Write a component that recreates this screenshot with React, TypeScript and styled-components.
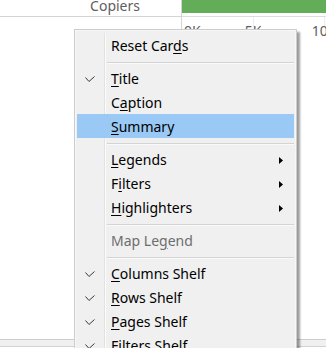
import React from 'react';
import styled, { createGlobalStyle } from 'styled-components';

const Global = createGlobalStyle`
  html, body { margin: 0; padding: 0; background: #ffffff; }
  body { font-family: "Noto Sans", "Open Sans", sans-serif; overflow: hidden; }
`;

const Page = styled.div`
  position: relative;
  width: 326px;
  height: 348px;
  overflow: hidden;
  display: flex;
  flex-direction: column;
  background: #ffffff;
`;

const Body = styled.div`
  flex: 1;
  display: grid;
  grid-template-columns: 182px 1fr;
`;

const RowHeaderPane = styled.div`
  border-right: 1px solid #d4d4d4;
  display: flex;
  flex-direction: column;
`;

const HeaderCell = styled.div`
  box-sizing: border-box;
  height: 17px;
  border-bottom: 1px solid #d4d4d4;
  display: flex;
  justify-content: flex-end;
  align-items: flex-start;
  padding-right: 41px;
`;

const HeaderText = styled.span`
  font-size: 14px;
  line-height: 11px;
  color: #5e5e5e;
`;

const ChartPane = styled.div`
  display: flex;
  flex-direction: column;
`;

const BarRow = styled.div`
  box-sizing: border-box;
  height: 17px;
  border-bottom: 1px solid #dcdcdc;
`;

const Bar = styled.div`
  height: 13px;
  background: #63ad58;
`;

const AxisRow = styled.div`
  position: relative;
  height: 24px;
`;

const GridLine = styled.div`
  position: absolute;
  top: 0;
  width: 1px;
  height: 10px;
  background: #ececec;
`;

const AxisLabel = styled.span`
  position: absolute;
  top: 6px;
  font-size: 14px;
  line-height: 16px;
  color: #5e5e5e;
  white-space: nowrap;
`;

const Footer = styled.div`
  height: 6px;
  margin-bottom: 1px;
  border-top: 1px solid #cdcdcd;
  border-bottom: 1px solid #d2d2d2;
  background: #f0f0f0;
`;

const Menu = styled.div`
  position: absolute;
  left: 74px;
  top: 29px;
  width: 223px;
  box-sizing: border-box;
  border: 1px solid #cccccc;
  padding: 3px 2px 2px 2px;
  background: #f0f0f0;
  box-shadow: inset 0 0 0 1px #f7f7f7, 3px 3px 2px rgba(0, 0, 0, 0.38);
  font-size: 14px;
  color: #000000;
`;

const MenuList = styled.div`
  display: flex;
  flex-direction: column;
  background: linear-gradient(
    to right,
    transparent 27px,
    #e2e2e2 27px,
    #e2e2e2 28px,
    #fbfbfb 28px,
    #fbfbfb 29px,
    transparent 29px
  );
`;

const Item = styled.div<{ $active?: boolean; $disabled?: boolean }>`
  display: grid;
  grid-template-columns: 27px 1fr auto;
  align-items: center;
  height: 24px;
  background: ${(p) => (p.$active ? '#99c9f4' : 'transparent')};
  color: ${(p) => (p.$disabled ? '#6d6d6d' : '#000000')};
`;

const CheckCell = styled.div`
  display: flex;
  align-items: center;
  padding-left: 8px;
  height: 24px;
  padding-top: 3px;
  box-sizing: border-box;
`;

const Label = styled.span`
  padding-left: 7px;
  padding-top: 2px;
  line-height: 22px;
  white-space: nowrap;
  u {
    text-decoration: underline;
    text-underline-offset: 2px;
    text-decoration-thickness: 1px;
  }
`;

const ArrowCell = styled.div`
  display: flex;
  align-items: center;
  padding-right: 11px;
  padding-top: 2px;
  height: 24px;
  box-sizing: border-box;
`;

const Separator = styled.div`
  height: 9px;
  margin-left: 30px;
  box-sizing: border-box;
  padding-top: 5px;
  &::before {
    content: '';
    display: block;
    height: 1px;
    background: #d4d4d4;
    box-shadow: 0 1px 0 #fafafa;
  }
`;

type Entry =
  | { kind: 'sep' }
  | {
      kind: 'item';
      label: string;
      u: number;
      checked?: boolean;
      submenu?: boolean;
      disabled?: boolean;
      active?: boolean;
    };

const entries: Entry[] = [
  { kind: 'item', label: 'Reset Cards', u: 9 },
  { kind: 'sep' },
  { kind: 'item', label: 'Title', u: 0, checked: true },
  { kind: 'item', label: 'Caption', u: 1 },
  { kind: 'item', label: 'Summary', u: 0, active: true },
  { kind: 'sep' },
  { kind: 'item', label: 'Legends', u: 0, submenu: true },
  { kind: 'item', label: 'Filters', u: 1, submenu: true },
  { kind: 'item', label: 'Highlighters', u: 0, submenu: true },
  { kind: 'sep' },
  { kind: 'item', label: 'Map Legend', u: 6, disabled: true },
  { kind: 'sep' },
  { kind: 'item', label: 'Columns Shelf', u: 0, checked: true },
  { kind: 'item', label: 'Rows Shelf', u: 0, checked: true },
  { kind: 'item', label: 'Pages Shelf', u: 0, checked: true },
  { kind: 'item', label: 'Filters Shelf', u: 1, checked: true },
];

const Check = () => (
  <svg width="10" height="7" viewBox="0 0 10 7">
    <path d="M0.5 1.5 L4 5.5 L9.5 0.5" fill="none" stroke="#3a3a3a" strokeWidth="1" />
  </svg>
);

const SubArrow = () => (
  <svg width="4" height="7" viewBox="0 0 4 7">
    <polygon points="0,0 4,3.5 0,7" fill="#000000" />
  </svg>
);

const Underlined = ({ text, index }: { text: string; index: number }) => (
  <>
    {text.slice(0, index)}
    <u>{text.charAt(index)}</u>
    {text.slice(index + 1)}
  </>
);

const ticks = [
  { value: 0, text: '0K', align: 'start' },
  { value: 5000, text: '5K', align: 'center' },
  { value: 10000, text: '10K', align: 'center' },
];
const AXIS_WIDTH = 142;
const AXIS_MAX = 10000;

export default function App() {
  return (
    <Page>
      <Global />
      <Body>
        <RowHeaderPane>
          <HeaderCell>
            <HeaderText>Copiers</HeaderText>
          </HeaderCell>
        </RowHeaderPane>
        <ChartPane>
          <BarRow>
            <Bar />
          </BarRow>
          <AxisRow>
            {ticks.map((t) => {
              const x = (t.value / AXIS_MAX) * AXIS_WIDTH;
              return (
                <React.Fragment key={t.text}>
                  {t.value > 0 && <GridLine style={{ left: x }} />}
                  <AxisLabel
                    style={{
                      left: t.align === 'start' ? x + 2 : x,
                      transform: t.align === 'center' ? 'translateX(-50%)' : undefined,
                    }}
                  >
                    {t.text}
                  </AxisLabel>
                </React.Fragment>
              );
            })}
          </AxisRow>
        </ChartPane>
      </Body>
      <Footer />
      <Menu>
        <MenuList>
          {entries.map((e, i) =>
            e.kind === 'sep' ? (
              <Separator key={i} />
            ) : (
              <Item key={i} $active={e.active} $disabled={e.disabled}>
                <CheckCell>{e.checked && <Check />}</CheckCell>
                <Label>
                  <Underlined text={e.label} index={e.u} />
                </Label>
                <ArrowCell>{e.submenu && <SubArrow />}</ArrowCell>
              </Item>
            )
          )}
        </MenuList>
      </Menu>
    </Page>
  );
}
